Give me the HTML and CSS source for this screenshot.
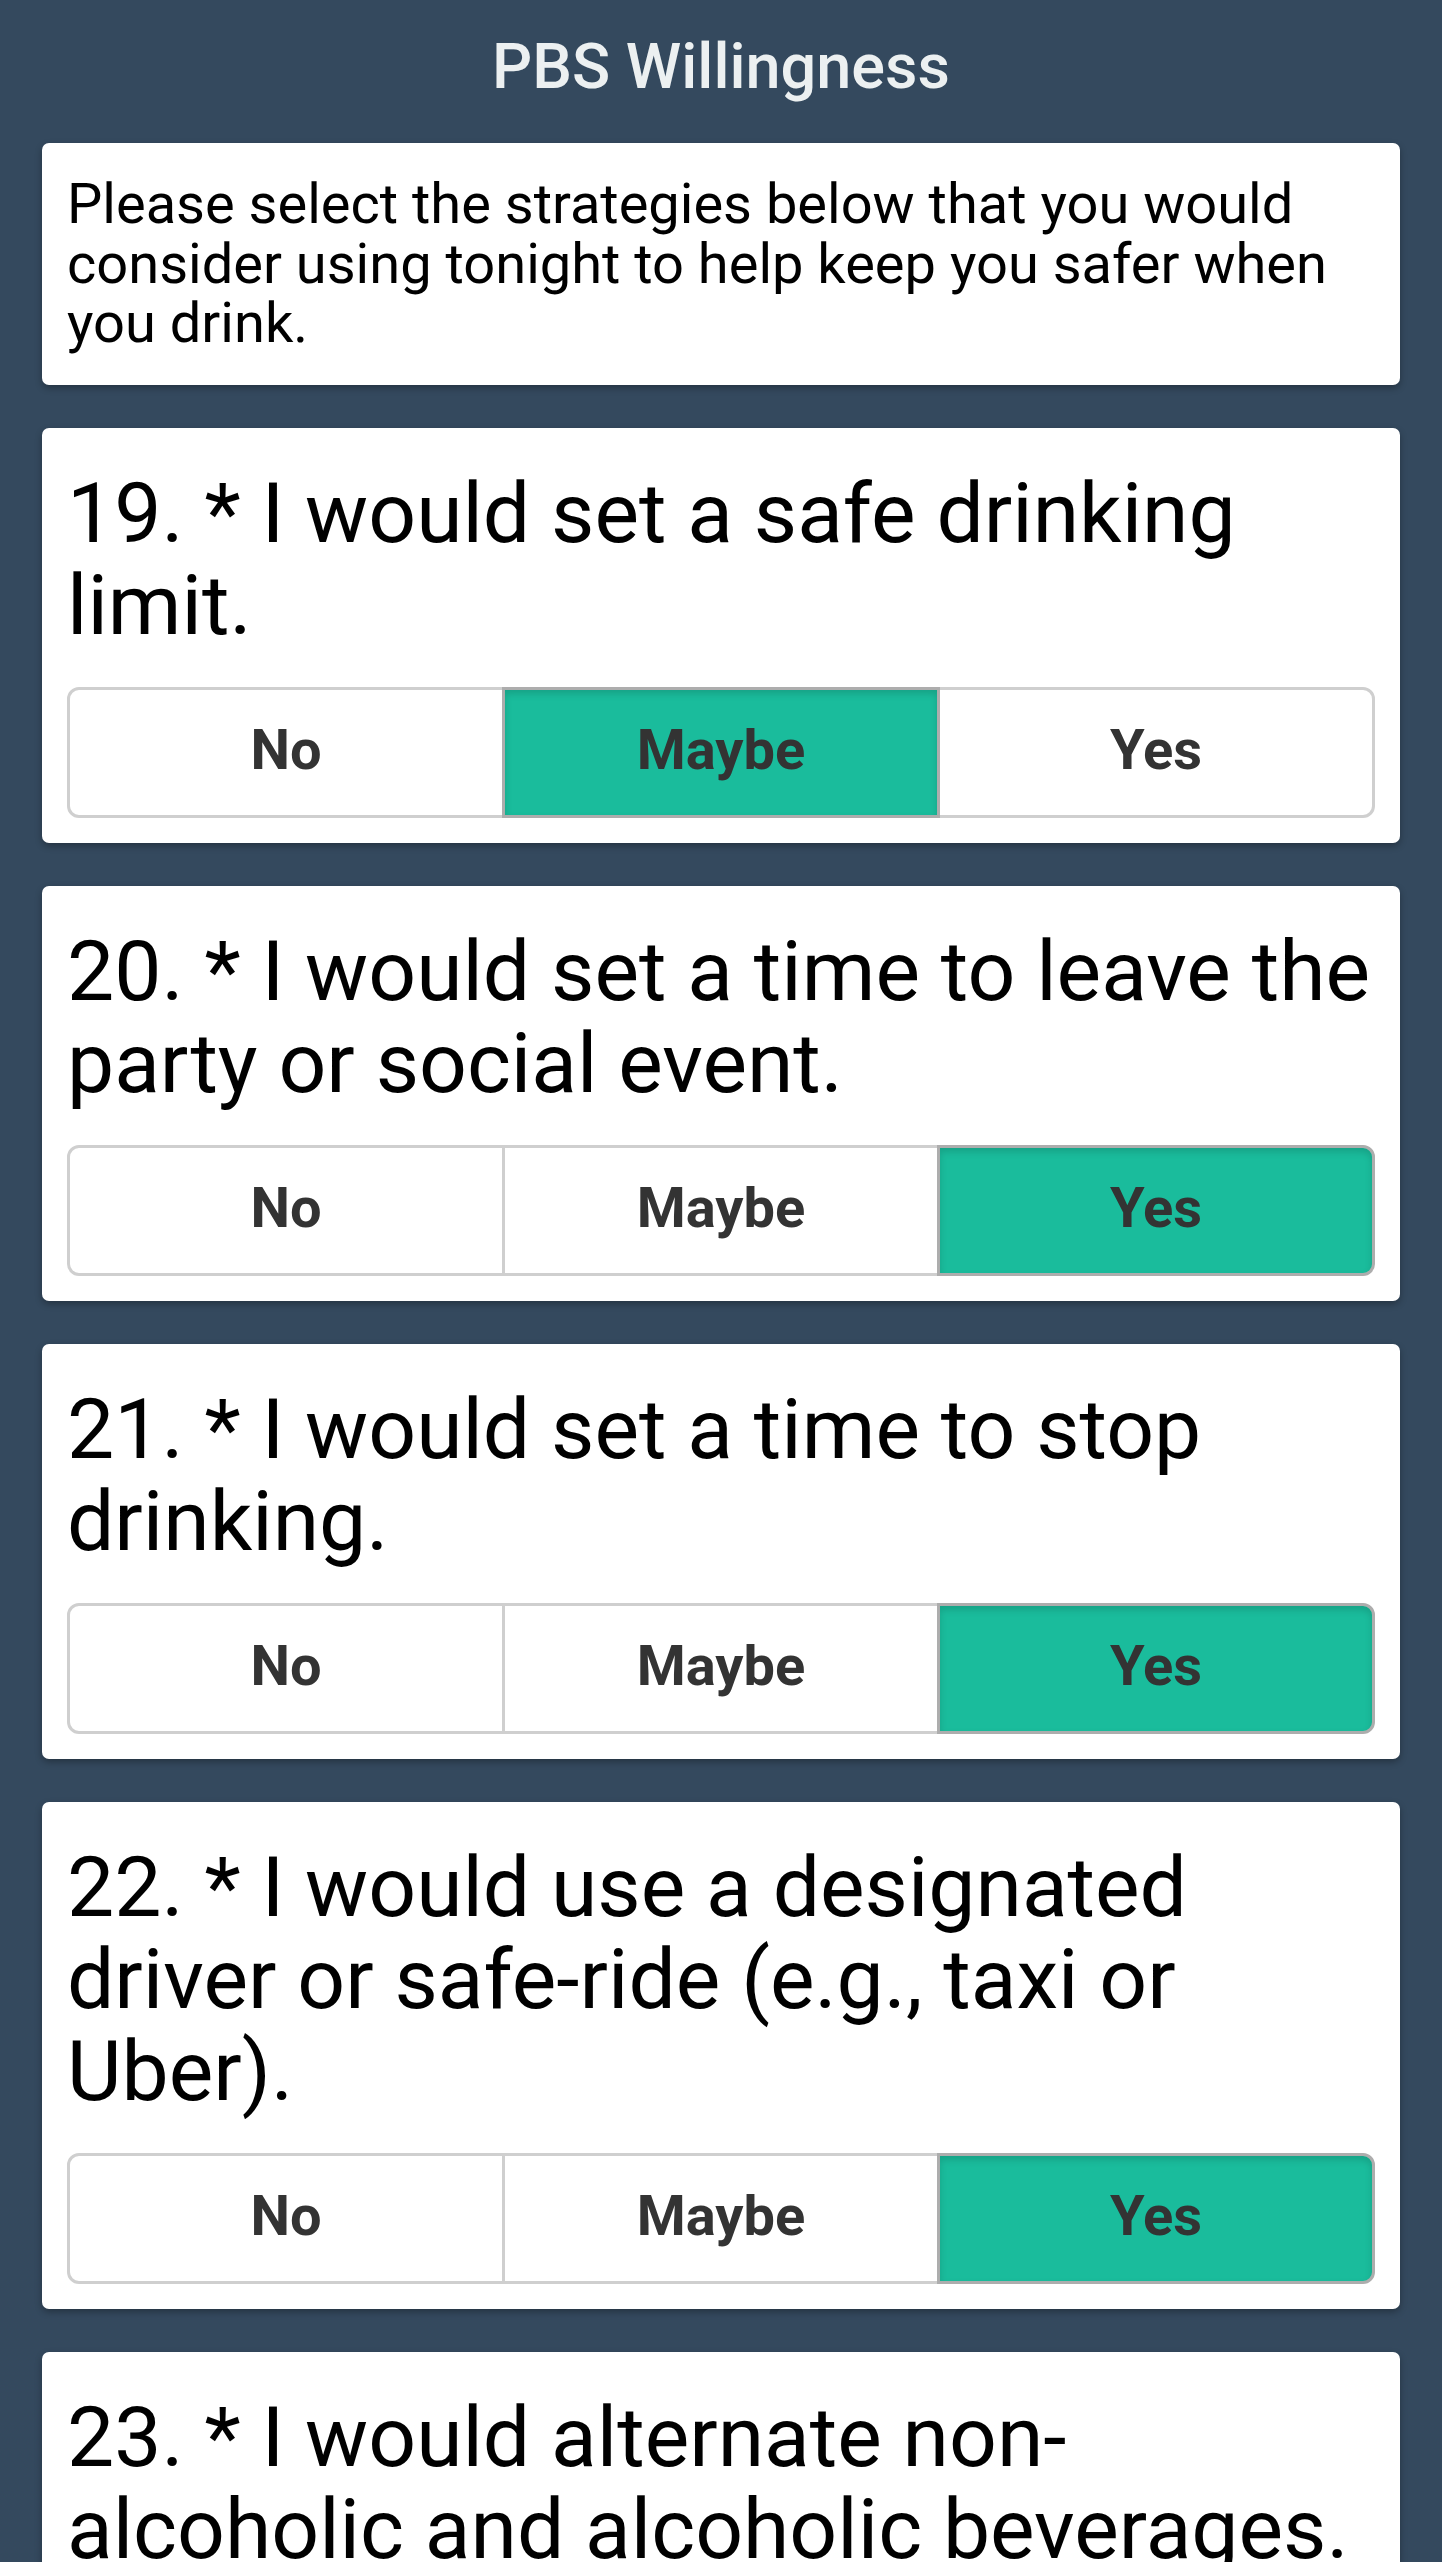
FILE: index.html
```html
<!DOCTYPE html>
<html>
<head>
<meta charset="utf-8">
<title>PBS Willingness</title>
<link rel="stylesheet" href="styles.css">
</head>
<body>
<header class="bar"><h1 class="title">PBS Willingness</h1></header>
<main class="list">
  <section class="card intro">
    <p class="intro-text">Please select the strategies below that you would consider using tonight to help keep you safer when you drink.</p>
  </section>
  <section class="card question">
    <h2 class="q-text">19. * I would set a safe drinking limit.</h2>
    <div class="seg">
      <div class="opt">No</div>
      <div class="opt active">Maybe</div>
      <div class="opt">Yes</div>
    </div>
  </section>
  <section class="card question">
    <h2 class="q-text">20. * I would set a time to leave the party or social event.</h2>
    <div class="seg">
      <div class="opt">No</div>
      <div class="opt">Maybe</div>
      <div class="opt active">Yes</div>
    </div>
  </section>
  <section class="card question">
    <h2 class="q-text">21. * I would set a time to stop drinking.</h2>
    <div class="seg">
      <div class="opt">No</div>
      <div class="opt">Maybe</div>
      <div class="opt active">Yes</div>
    </div>
  </section>
  <section class="card question">
    <h2 class="q-text">22. * I would use a designated driver or safe-ride (e.g., taxi or Uber).</h2>
    <div class="seg">
      <div class="opt">No</div>
      <div class="opt">Maybe</div>
      <div class="opt active">Yes</div>
    </div>
  </section>
  <section class="card question">
    <h2 class="q-text">23. * I would alternate non-alcoholic and alcoholic beverages.</h2>
    <div class="seg">
      <div class="opt">No</div>
      <div class="opt">Maybe</div>
      <div class="opt">Yes</div>
    </div>
  </section>
</main>
</body>
</html>
```

FILE: styles.css
```css
html, body {
  margin: 0;
  padding: 0;
  background: #34495e;
}
body {
  font-family: Roboto, "Noto Sans", "Liberation Sans", sans-serif;
  width: 1442px;
  overflow: hidden;
}
.bar {
  height: 133px;
  text-align: center;
}
.title {
  margin: 0;
  font-size: 63px;
  line-height: 133px;
  font-weight: 500;
  color: #ecf0f1;
}
.list {
  display: flex;
  flex-direction: column;
  gap: 43px;
  padding: 10px 42px 0;
}
.card {
  background: #ffffff;
  border-radius: 7px;
  box-shadow: 0 3px 7px rgba(0, 0, 0, 0.3);
}
.intro {
  padding: 32px 25px 31px;
}
.intro-text {
  margin: 0;
  font-size: 56px;
  line-height: 59.5px;
  color: #000;
}
.question {
  padding: 40px 25px 25px;
}
.q-text {
  margin: 0 0 35px;
  font-size: 84px;
  line-height: 92px;
  font-weight: 400;
  color: #000;
}
.seg {
  display: flex;
  height: 131px;
}
.opt {
  flex: 1 1 0;
  display: flex;
  align-items: center;
  justify-content: center;
  box-sizing: border-box;
  padding-bottom: 5px;
  border: 3px solid #cfcfcf;
  background: #ffffff;
  color: #333333;
  font-size: 56px;
  font-weight: 700;
  position: relative;
}
.opt + .opt {
  margin-left: -3px;
}
.opt:first-child {
  border-radius: 12px 0 0 12px;
}
.opt:last-child {
  border-radius: 0 12px 12px 0;
}
.opt.active {
  background: #1abc9c;
  border-color: #adadad;
  box-shadow: inset 0 4px 7px rgba(0, 0, 0, 0.14);
  z-index: 1;
}
```
